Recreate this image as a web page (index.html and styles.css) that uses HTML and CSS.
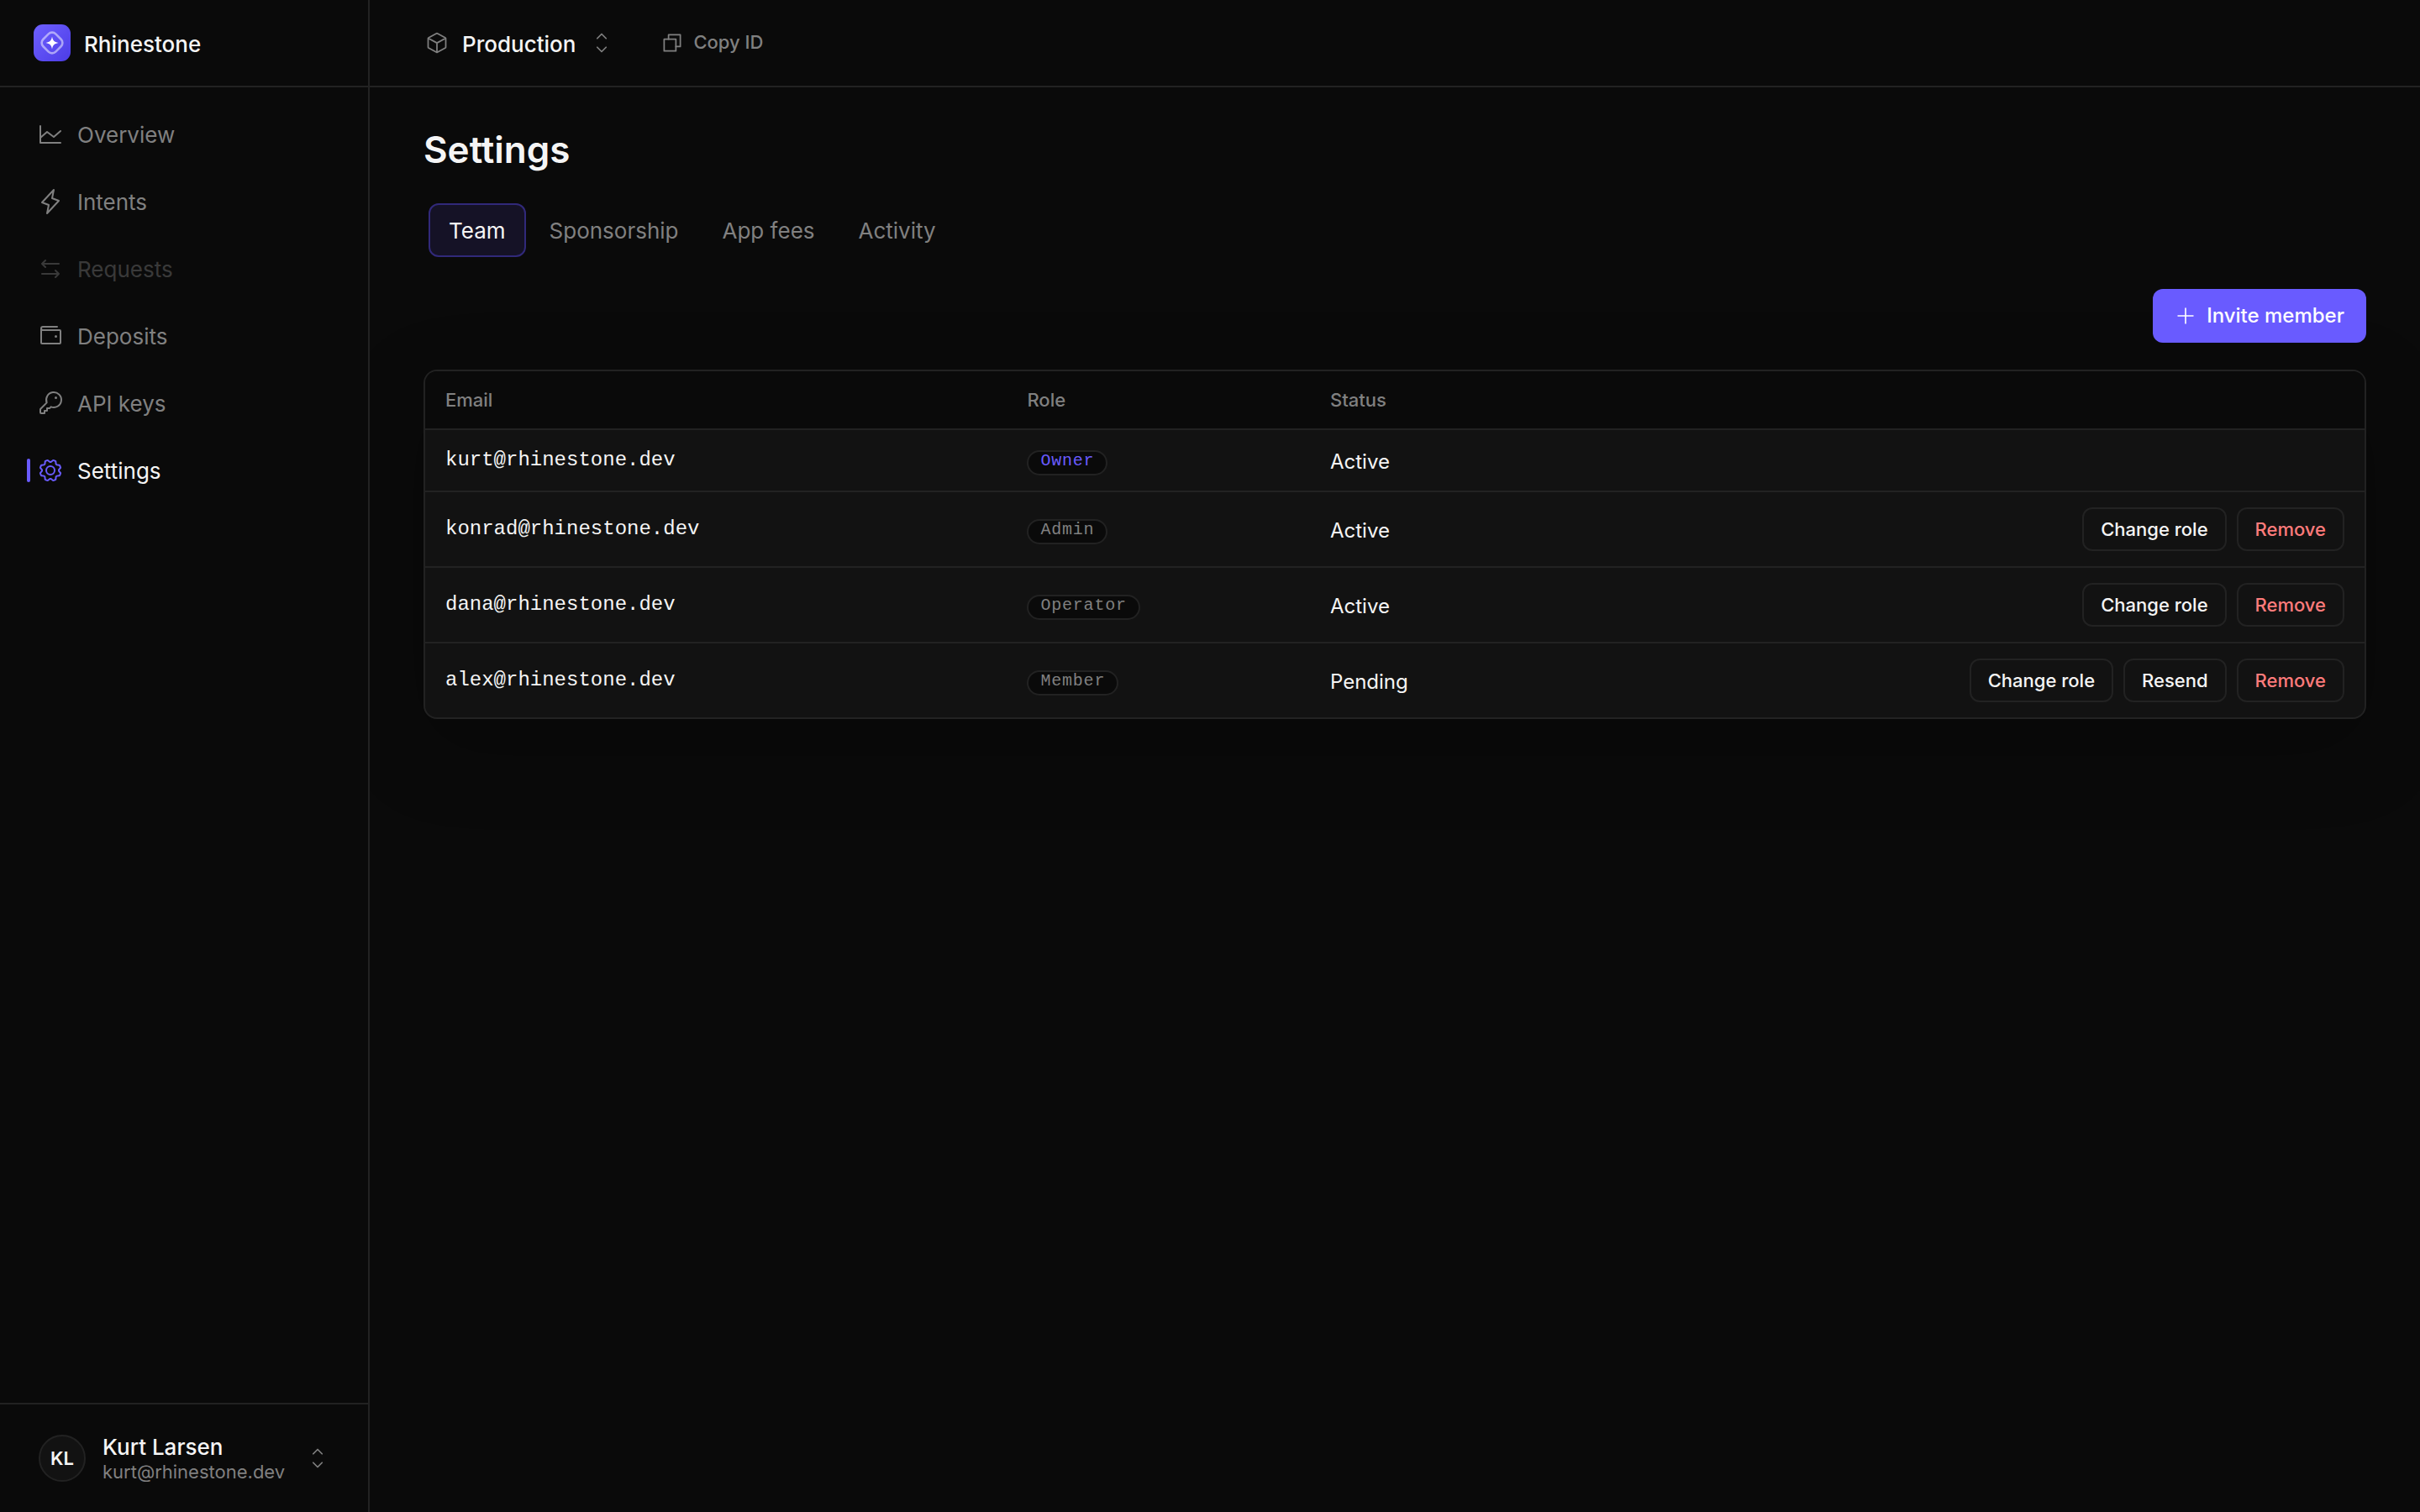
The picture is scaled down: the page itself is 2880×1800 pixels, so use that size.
FILE: index.html
```html
<!DOCTYPE html>
<html lang="en">
<head>
<meta charset="utf-8">
<title>Settings – Rhinestone</title>
<link rel="stylesheet" href="styles.css">
</head>
<body>
<svg class="sprite" aria-hidden="true">
  <symbol id="chart" viewBox="0 0 256 256"><polyline points="224 208 32 208 32 48"/><polyline points="224 96 160 152 96 104 32 160"/></symbol>
  <symbol id="bolt" viewBox="0 0 256 256"><polygon points="160 16 144 96 208 120 96 240 112 160 48 136 160 16"/></symbol>
  <symbol id="arrows" viewBox="0 0 256 256"><path d="M208 80H48M80 48 48 80l32 32M48 176h160M176 144l32 32-32 32"/></symbol>
  <symbol id="wallet" viewBox="0 0 256 256"><path d="M40,56V192a8,8,0,0,0,8,8H216a8,8,0,0,0,8-8V80a8,8,0,0,0-8-8H56A16,16,0,0,1,40,56h0A16,16,0,0,1,56,40H192"/><circle class="dot" cx="180" cy="132" r="12"/></symbol>
  <symbol id="key" viewBox="0 0 256 256"><path d="M93.17,122.83a71.93,71.93,0,1,1,40,40h0L120,176H96v24H72v24H40a8,8,0,0,1-8-8V187.31a8,8,0,0,1,2.34-5.65l58.83-58.83Z"/><circle class="dot" cx="180" cy="76" r="12"/></symbol>
  <symbol id="gear" viewBox="0 0 256 256"><path class="dot" d="M128,80a48,48,0,1,0,48,48A48.05,48.05,0,0,0,128,80Zm0,80a32,32,0,1,1,32-32A32,32,0,0,1,128,160Zm88-29.84q.06-2.16,0-4.32l14.92-18.64a8,8,0,0,0,1.48-7.06,107.21,107.21,0,0,0-10.88-26.25,8,8,0,0,0-6-3.93l-23.72-2.64q-1.48-1.56-3-3L186,40.54a8,8,0,0,0-3.94-6,107.71,107.71,0,0,0-26.25-10.87,8,8,0,0,0-7.06,1.49L130.16,40Q128,40,125.84,40L107.2,25.11a8,8,0,0,0-7.06-1.48A107.6,107.6,0,0,0,73.89,34.51a8,8,0,0,0-3.93,6L67.32,64.27q-1.56,1.49-3,3L40.54,70a8,8,0,0,0-6,3.94,107.71,107.71,0,0,0-10.87,26.25,8,8,0,0,0,1.49,7.06L40,125.84Q40,128,40,130.16L25.11,148.8a8,8,0,0,0-1.48,7.06,107.21,107.21,0,0,0,10.88,26.25,8,8,0,0,0,6,3.93l23.72,2.64q1.49,1.56,3,3L70,215.46a8,8,0,0,0,3.94,6,107.71,107.71,0,0,0,26.25,10.87,8,8,0,0,0,7.06-1.49L125.84,216q2.16.06,4.32,0l18.64,14.92a8,8,0,0,0,7.06,1.48,107.21,107.21,0,0,0,26.25-10.88,8,8,0,0,0,3.93-6l2.64-23.72q1.56-1.48,3-3L215.46,186a8,8,0,0,0,6-3.94,107.71,107.71,0,0,0,10.87-26.25,8,8,0,0,0-1.49-7.06Zm-16.1-6.5a73.93,73.93,0,0,1,0,8.68,8,8,0,0,0,1.74,5.48l14.19,17.73a91.57,91.57,0,0,1-6.23,15L187,173.11a8,8,0,0,0-5.1,2.64,74.11,74.11,0,0,1-6.14,6.14,8,8,0,0,0-2.64,5.1l-2.51,22.58a91.32,91.32,0,0,1-15,6.23l-17.74-14.19a8,8,0,0,0-5-1.75h-.48a73.93,73.93,0,0,1-8.68,0,8,8,0,0,0-5.48,1.74L100.45,215.8a91.57,91.57,0,0,1-15-6.23L82.89,187a8,8,0,0,0-2.64-5.1,74.11,74.11,0,0,1-6.14-6.14,8,8,0,0,0-5.1-2.64L46.43,170.6a91.32,91.32,0,0,1-6.23-15l14.19-17.74a8,8,0,0,0,1.74-5.48,73.93,73.93,0,0,1,0-8.68,8,8,0,0,0-1.74-5.48L40.2,100.45a91.57,91.57,0,0,1,6.23-15L69,82.89a8,8,0,0,0,5.1-2.64,74.11,74.11,0,0,1,6.14-6.14A8,8,0,0,0,82.89,69L85.4,46.43a91.32,91.32,0,0,1,15-6.23l17.74,14.19a8,8,0,0,0,5.48,1.74,73.93,73.93,0,0,1,8.68,0,8,8,0,0,0,5.48-1.74L155.55,40.2a91.57,91.57,0,0,1,15,6.23L173.11,69a8,8,0,0,0,2.64,5.1,74.11,74.11,0,0,1,6.14,6.14,8,8,0,0,0,5.1,2.64l22.58,2.51a91.32,91.32,0,0,1,6.23,15l-14.19,17.74A8,8,0,0,0,199.87,123.66Z"/></symbol>
  <symbol id="cube" viewBox="0 0 256 256"><path d="M128 129.100V232M32.700 76.900 128 129.100l95.300-52.200M219.800 182.800l-88 48.200a8 8 0 0 1-7.600 0l-88-48.200a8 8 0 0 1-4.200-7V80.200a8 8 0 0 1 4.200-7l88-48.200a8 8 0 0 1 7.600 0l88 48.200a8 8 0 0 1 4.200 7v95.600a8 8 0 0 1-4.200 7z"/></symbol>
  <symbol id="updown" viewBox="0 0 256 256"><path d="m80 176 48 48 48-48M80 80l48-48 48 48"/></symbol>
  <symbol id="copy" viewBox="0 0 256 256"><path d="M168 168h48V40H88v48"/><rect x="40" y="88" width="128" height="128"/></symbol>
  <symbol id="plus" viewBox="0 0 256 256"><path d="M40 128h176M128 40v176"/></symbol>
</svg>
<div class="app">
  <aside class="sidebar">
    <div class="brand">
      <svg class="logo" viewBox="0 0 44 44">
        <defs><linearGradient id="brandFill" x1="0" y1="0" x2="1" y2="1"><stop offset="0" stop-color="#6e60ff"/><stop offset="1" stop-color="#4c3ce6"/></linearGradient></defs>
        <rect width="44" height="44" rx="11" fill="url(#brandFill)"/>
        <rect x="11.500" y="11.500" width="21" height="21" rx="6" transform="rotate(45 22 22)" fill="none" stroke="#fff" stroke-opacity=".5" stroke-width="2.600"/>
        <path d="M22 14.500C23 19.500 24.500 21 29.500 22 24.500 23 23 24.500 22 29.500 21 24.500 19.500 23 14.500 22 19.500 21 21 19.500 22 14.500Z" fill="#fff"/>
      </svg>
      <span class="brand-name">Rhinestone</span>
    </div>
    <nav class="nav">
      <a class="nav-item"><svg class="icon"><use href="#chart"/></svg>Overview</a>
      <a class="nav-item"><svg class="icon"><use href="#bolt"/></svg>Intents</a>
      <a class="nav-item disabled"><svg class="icon"><use href="#arrows"/></svg>Requests</a>
      <a class="nav-item"><svg class="icon"><use href="#wallet"/></svg>Deposits</a>
      <a class="nav-item"><svg class="icon"><use href="#key"/></svg>API keys</a>
      <a class="nav-item active"><svg class="icon"><use href="#gear"/></svg>Settings</a>
    </nav>
    <div class="account">
      <div class="avatar">KL</div>
      <div class="account-text">
        <div class="account-name">Kurt Larsen</div>
        <div class="account-email">kurt@rhinestone.dev</div>
      </div>
      <svg class="icon small"><use href="#updown"/></svg>
    </div>
  </aside>
  <div class="main">
    <header class="topbar">
      <svg class="icon small"><use href="#cube"/></svg>
      <span class="project">Production</span>
      <svg class="icon small carets"><use href="#updown"/></svg>
      <svg class="icon copy-icon"><use href="#copy"/></svg>
      <span class="copy-label">Copy ID</span>
    </header>
    <main class="content">
      <h1 class="title">Settings</h1>
      <div class="tabs">
        <a class="tab selected">Team</a>
        <a class="tab">Sponsorship</a>
        <a class="tab">App fees</a>
        <a class="tab">Activity</a>
      </div>
      <div class="actions-bar">
        <button class="invite"><svg class="icon plus"><use href="#plus"/></svg><span>Invite member</span></button>
      </div>
      <div class="card">
        <div class="row head"><div>Email</div><div>Role</div><div>Status</div><div></div></div>
        <div class="row owner-row">
          <div class="email">kurt@rhinestone.dev</div>
          <div class="role"><span class="pill owner">Owner</span></div>
          <div class="status">Active</div>
          <div class="buttons"></div>
        </div>
        <div class="row">
          <div class="email">konrad@rhinestone.dev</div>
          <div class="role"><span class="pill">Admin</span></div>
          <div class="status">Active</div>
          <div class="buttons"><button class="btn">Change role</button><button class="btn danger">Remove</button></div>
        </div>
        <div class="row">
          <div class="email">dana@rhinestone.dev</div>
          <div class="role"><span class="pill">Operator</span></div>
          <div class="status">Active</div>
          <div class="buttons"><button class="btn">Change role</button><button class="btn danger">Remove</button></div>
        </div>
        <div class="row">
          <div class="email">alex@rhinestone.dev</div>
          <div class="role"><span class="pill">Member</span></div>
          <div class="status">Pending</div>
          <div class="buttons"><button class="btn">Change role</button><button class="btn">Resend</button><button class="btn danger">Remove</button></div>
        </div>
      </div>
    </main>
  </div>
</div>
</body>
</html>
```
FILE: styles.css
```css
* { box-sizing: border-box; }

body {
  margin: 0;
  background: #0a0a0a;
  color: #f5f5f5;
  font-family: Inter, "Liberation Sans", sans-serif;
  font-size: 26px;
}

.sprite { display: none; }

.app {
  display: grid;
  grid-template-columns: 440px 1fr;
  height: 1800px;
}

.icon {
  width: 32px;
  height: 32px;
  flex: none;
  fill: none;
  stroke: currentColor;
  stroke-width: 16;
  stroke-linecap: round;
  stroke-linejoin: round;
}
.icon.small { width: 28px; height: 28px; color: #808080; }
#wallet .dot, #key .dot, #gear .dot { fill: currentColor; stroke: none; }

/* Sidebar */
.sidebar {
  position: relative;
  z-index: 1;
  display: flex;
  flex-direction: column;
  border-right: 2px solid #222;
  background: #0a0a0a;
}
.brand {
  display: flex;
  align-items: center;
  gap: 16px;
  height: 104px;
  padding-left: 40px;
  border-bottom: 2px solid #222;
}
.logo { width: 44px; height: 44px; }
.brand-name { padding-top: 2px; font-weight: 500; }

.nav {
  display: flex;
  flex-direction: column;
  gap: 16px;
  padding: 24px 24px 0 32px;
}
.nav-item {
  display: flex;
  align-items: center;
  gap: 16px;
  height: 64px;
  padding-left: 12px;
  color: #808080;
}
.nav-item.disabled { opacity: 0.4; }
.nav-item.active { position: relative; color: #f5f5f5; }
.nav-item.active .icon { color: #695bff; }
.nav-item.active::before {
  content: "";
  position: absolute;
  left: 0;
  top: 18px;
  width: 4px;
  height: 28px;
  border-radius: 2px;
  background: #695bff;
}

.account {
  display: flex;
  align-items: center;
  height: 130px;
  margin-top: auto;
  padding: 0 46px;
  border-top: 2px solid #222;
}
.avatar {
  display: grid;
  place-items: center;
  width: 56px;
  height: 56px;
  border: 2px solid #222;
  border-radius: 50%;
  background: #121212;
  font-size: 22px;
  font-weight: 600;
}
.account-text { margin-left: 20px; }
.account-name { font-size: 26px; font-weight: 500; line-height: 32px; }
.account-email { font-size: 22px; line-height: 26px; color: #808080; }
.account .icon { margin-left: auto; }

/* Top bar */
.topbar {
  display: flex;
  align-items: center;
  height: 104px;
  padding-left: 66px;
  border-bottom: 2px solid #222;
}
.project { margin-left: 16px; padding-top: 2px; font-weight: 500; }
.carets { margin-left: 17px; }
.copy-icon { width: 28px; height: 28px; margin-left: 56px; color: #808080; }
.copy-label { margin-left: 11px; padding-bottom: 3px; font-size: 22px; font-weight: 500; color: #808080; }

/* Content */
.content { padding: 48px 64px 0; }
.title {
  margin: 0;
  font-size: 44px;
  line-height: 52px;
  font-weight: 600;
}
.tabs { display: flex; gap: 4px; margin-top: 38px; padding-left: 6px; }
.tab {
  height: 64px;
  padding: 0 22px;
  border: 2px solid transparent;
  border-radius: 12px;
  line-height: 61px;
  color: #808080;
}
.tab.selected { border-color: #31297a; background: #151226; color: #f5f5f5; }

.actions-bar { display: flex; justify-content: flex-end; margin-top: 38px; }
button { font-family: inherit; cursor: pointer; }
.invite {
  display: flex;
  align-items: center;
  gap: 12px;
  height: 64px;
  padding: 0 26px;
  border: 0;
  border-radius: 12px;
  background: #695bff;
  color: #fff;
  font-size: 24px;
  font-weight: 500;
}
.invite span { padding-bottom: 2px; }
.invite .plus { width: 26px; height: 26px; }

.card {
  margin-top: 32px;
  overflow: hidden;
  border: 2px solid #222;
  border-radius: 16px;
  background: #121212;
  box-shadow: 0 32px 96px rgba(0, 0, 0, 0.25);
}
.row {
  display: grid;
  grid-template-columns: 692.4px 360.6px 300px 1fr;
  align-items: center;
  height: 90px;
  padding: 0 24px;
  border-bottom: 2px solid #222;
}
.row:last-child { height: 88px; border-bottom: 0; }
.row.head { height: 70px; background: #0a0a0a; font-size: 22px; font-weight: 500; color: #808080; }
.row.owner-row { height: 74px; }
.email { padding-bottom: 2px; font-family: "Liberation Mono", monospace; font-size: 24px; }
.status { padding-top: 2px; font-size: 24px; }
.role { display: flex; padding-top: 6px; }
.pill {
  height: 30px;
  padding: 0 14px;
  border: 2px solid #222;
  border-radius: 15px;
  background: #0a0a0a;
  color: #808080;
  font-family: "Liberation Mono", monospace;
  font-size: 20px;
  line-height: 22px;
  letter-spacing: 0.04em;
}
.pill.owner { color: #695bff; }
.buttons { display: flex; justify-content: flex-end; gap: 12px; }
.btn {
  height: 52px;
  padding: 0 20px;
  border: 2px solid #222;
  border-radius: 12px;
  background: #121212;
  color: #f5f5f5;
  font-size: 22px;
  font-weight: 500;
}
.btn.danger { color: #ff7b7b; }
```
